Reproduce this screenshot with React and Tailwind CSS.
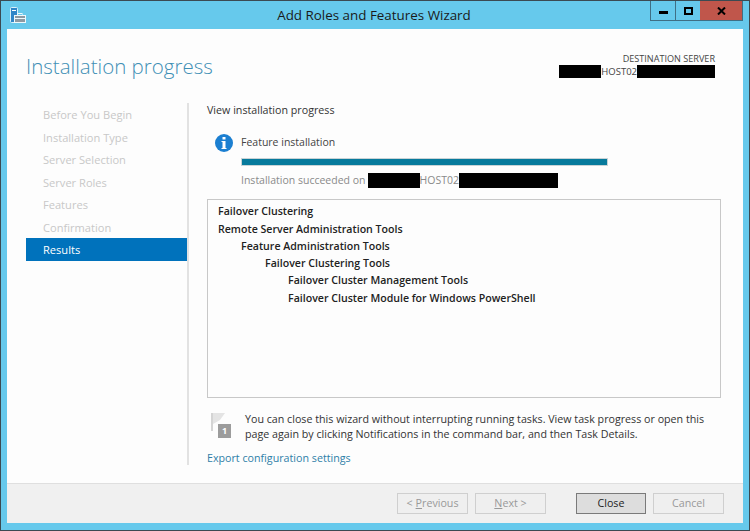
const steps = ['Before You Begin', 'Installation Type', 'Server Selection', 'Server Roles', 'Features', 'Confirmation'];

const Redacted = ({ className }) => <span className={`inline-block bg-black ${className}`}></span>;

const AppIcon = () => (
    <svg width="16" height="17" viewBox="0 0 16 17" className="shrink-0">
        <rect x="0.5" y="0.5" width="7" height="15" rx="1" fill="#2f86c8" stroke="#d8f0fa" />
        <rect x="2" y="3" width="4" height="1" fill="#fff" />
        <rect x="4.5" y="8.5" width="11" height="7" fill="#8d9aa3" stroke="#eef8fc" />
        <rect x="8" y="6.5" width="4" height="2" fill="none" stroke="#eef8fc" />
        <rect x="5" y="11" width="10" height="1" fill="#eef8fc" />
    </svg>
);

const WizardButton = ({ children, active }) => (
    <button
        className={`h-[21px] flex items-center justify-center border text-[10.7px] ${
            active ? 'w-[70px] bg-[#dddddd] border-[#7a7a7a] text-[#222]' : 'w-[71px] bg-[#efefef] border-[#cfcfcf] text-[#999]'
        }`}
    >
        {children}
    </button>
);

const App = () => {
    return (
        <div className="w-[750px] h-[531px] flex flex-col bg-[#66c9ec] border border-[#3b4a52] font-['Open_Sans',sans-serif] text-[#333] overflow-hidden">
            <div className="h-[28px] shrink-0 flex items-center pl-[9px] relative">
                <AppIcon />
                <div className="flex-1 text-center text-[13.4px] text-[#1a1a1a] pr-[27px]">Add Roles and Features Wizard</div>
                <div className="absolute right-[6px] top-0 h-[20px] flex border border-t-0 border-[#3f6f85]">
                    <div className="w-[25px] flex items-center justify-center border-r border-[#3f6f85]">
                        <span className="w-[9px] h-[3px] bg-black mt-[4px]"></span>
                    </div>
                    <div className="w-[24px] flex items-center justify-center">
                        <span className="w-[9px] h-[8px] border-2 border-black"></span>
                    </div>
                    <div className="w-[42px] flex items-center justify-center bg-[#c0564b]">
                        <svg width="9" height="8" viewBox="0 0 9 8">
                            <path d="M1 0.5 L8 7.5 M8 0.5 L1 7.5" stroke="#000" strokeWidth="2" />
                        </svg>
                    </div>
                </div>
            </div>

            <div className="flex-1 mx-[6px] mb-[7px] flex flex-col bg-[#fdfdfd] min-h-0">
                <div className="h-[454px] shrink-0 flex flex-col">
                    <div className="h-[74px] shrink-0 flex justify-between pl-[19px] pr-[28px]">
                        <h1 className="text-[20.5px] font-light text-[#3f8fb5] mt-[21px] leading-[32px]">Installation progress</h1>
                        <div className="mt-[24px] text-right text-[9.1px] leading-[12px] text-[#444]">
                            <div>DESTINATION SERVER</div>
                            <div className="flex items-center text-[9.5px]">
                                <Redacted className="w-[42px] h-[13px]" />
                                <span>HOST02</span>
                                <Redacted className="w-[78px] h-[13px]" />
                            </div>
                        </div>
                    </div>

                    <div className="flex-1 flex min-h-0 pl-[19px]">
                        <div className="w-[161px] shrink-0 pt-[1.5px]">
                            {steps.map((s) => (
                                <div key={s} className="h-[22.5px] pl-[17px] flex items-center text-[11.1px] text-[#c8c8c8]">{s}</div>
                            ))}
                            <div className="-mt-[1.5px] h-[23px] pl-[17px] pt-[1px] flex items-center text-[11.1px] text-white bg-[#0072bc]">Results</div>
                        </div>
                        <div className="w-[2px] h-[362px] bg-[#e2e2e2]"></div>

                        <div className="w-[514px] ml-[18px]">
                            <div className="text-[10.7px] leading-[14px] text-[#333]">View installation progress</div>
                            <div className="flex mt-[17px] ml-[8px] gap-[8px]">
                                <div className="w-[18px] h-[18px] rounded-full bg-[#1b7fd1] flex items-center justify-center">
                                    <svg width="6" height="12" viewBox="0 0 6 12">
                                        <rect x="1.5" y="0" width="3" height="2.5" fill="#fff" />
                                        <path d="M0.5 4 H4.5 V11 H5.5 V12 H0.5 V11 H1.5 V5 H0.5 Z" fill="#fff" />
                                    </svg>
                                </div>
                                <div className="flex-1">
                                    <div className="text-[10.5px] leading-[16px] text-[#444]">Feature installation</div>
                                    <div className="mt-[8px] w-[367px] h-[8px] bg-[#077a9c] border border-[#c9d3d6]"></div>
                                    <div className="mt-[6px] flex items-center text-[10.5px] leading-[16px] text-[#8a8a8a]">
                                        <span>Installation succeeded on</span>
                                        <Redacted className="w-[52px] h-[15px] ml-[2px]" />
                                        <span>HOST02</span>
                                        <Redacted className="w-[99px] h-[15px]" />
                                    </div>
                                </div>
                            </div>

                            <div className="mt-[11px] h-[199px] border border-[#c8c8c8] pt-[2px] pl-[10px] text-[10.6px] font-semibold text-[#222]">
                                <div className="h-[18px] leading-[18px]">Failover Clustering</div>
                                <div className="h-[18px] leading-[18px]">Remote Server Administration Tools</div>
                                <div className="h-[17px] leading-[17px] pl-[23px]">Feature Administration Tools</div>
                                <div className="h-[17px] leading-[17px] pl-[47px]">Failover Clustering Tools</div>
                                <div className="h-[17px] leading-[17px] pl-[70px]">Failover Cluster Management Tools</div>
                                <div className="h-[18px] leading-[18px] pl-[70px]">Failover Cluster Module for Windows PowerShell</div>
                            </div>

                            <div className="flex mt-[14px] ml-[4px] gap-[13px]">
                                <div className="relative w-[21px] h-[26px] shrink-0 mt-[1px]">
                                    <svg width="21" height="26" viewBox="0 0 21 26">
                                        <path d="M0 0 H2 V18 H0 Z" fill="#d4d4d4" />
                                        <path d="M2 0 H14 L9 7 L2 11 Z" fill="#e4e4e4" />
                                    </svg>
                                    <span className="absolute left-[7px] bottom-[1px] w-[13px] h-[14px] bg-[#9c9c9c] text-white text-[9px] font-bold leading-[14px] text-center">1</span>
                                </div>
                                <div className="text-[10.7px] leading-[15px] text-[#333]">
                                    You can close this wizard without interrupting running tasks. View task progress or open this page again by clicking Notifications in the command bar, and then Task Details.
                                </div>
                            </div>
                            <div className="mt-[8px] text-[10.7px] leading-[16px] text-[#2f7fa8]">Export configuration settings</div>
                        </div>
                    </div>
                </div>

                <div className="flex-1 bg-[#f0f0f0] border-t border-[#dfdfdf] flex items-center justify-end gap-[7px] pr-[19px]">
                    <WizardButton>&lt; <span className="ml-[3px]"><span className="underline">P</span>revious</span></WizardButton>
                    <WizardButton><span className="underline">N</span>ext &gt;</WizardButton>
                    <div className="w-[16px]"></div>
                    <WizardButton active>Close</WizardButton>
                    <WizardButton>Cancel</WizardButton>
                </div>
            </div>
        </div>
    );
};

export default App;
